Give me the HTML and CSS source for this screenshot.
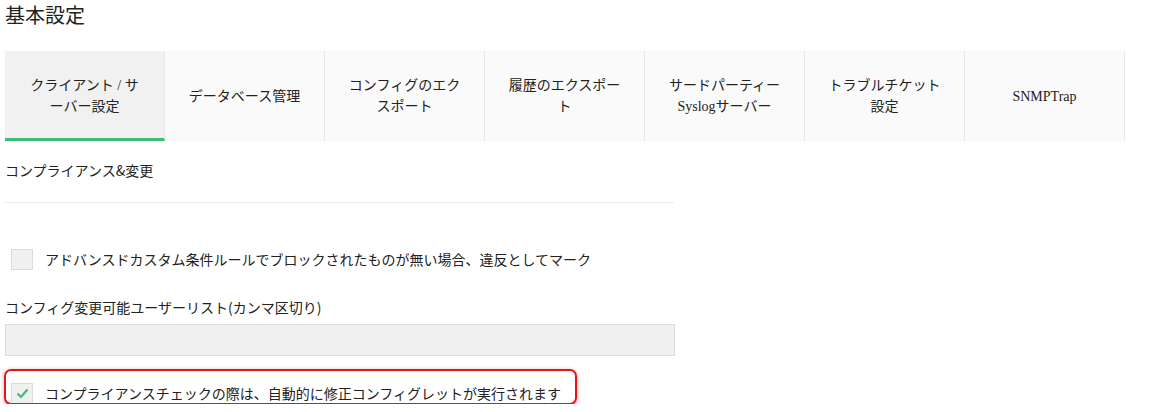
FILE: index.html
```html
<!DOCTYPE html>
<html lang="ja">
<head>
<meta charset="utf-8">
<title>基本設定</title>
<link rel="stylesheet" href="styles.css">
</head>
<body>
<div class="page">
  <h1 class="title">基本設定</h1>
  <div class="tabs">
    <div class="tab active">クライアント / サ<br>ーバー設定</div>
    <div class="tab">データベース管理</div>
    <div class="tab">コンフィグのエク<br>スポート</div>
    <div class="tab">履歴のエクスポー<br>ト</div>
    <div class="tab">サードパーティー<br>Syslogサーバー</div>
    <div class="tab">トラブルチケット<br>設定</div>
    <div class="tab">SNMPTrap</div>
  </div>
  <div class="section-head">コンプライアンス&amp;変更</div>
  <div class="check-row first">
    <span class="box"></span>
    <span class="check-label">アドバンスドカスタム条件ルールでブロックされたものが無い場合、違反としてマーク</span>
  </div>
  <div class="field-label">コンフィグ変更可能ユーザーリスト(カンマ区切り)</div>
  <div class="input"></div>
  <div class="check-row last highlighted">
    <span class="box checked">
      <svg width="13" height="11" viewBox="0 0 13 11"><polyline points="1.5,5.5 5,9 11.5,1.5" fill="none" stroke="#3dbb78" stroke-width="2.2"/></svg>
    </span>
    <span class="check-label">コンプライアンスチェックの際は、自動的に修正コンフィグレットが実行されます</span>
  </div>
</div>
</body>
</html>
```

FILE: styles.css
```css
html, body {
  margin: 0;
  padding: 0;
  background: #fff;
}
body {
  font-family: "Noto Sans CJK JP", sans-serif;
  color: #222;
}
.page {
  padding-left: 5px;
}
.title {
  margin: 0;
  font-size: 20px;
  font-weight: normal;
  line-height: 30px;
  color: #222;
}
.tabs {
  margin-top: 21px;
  display: flex;
  width: 1120px;
  height: 90px;
  background: #fafafa;
}
.tab {
  box-sizing: border-box;
  width: 160px;
  height: 90px;
  border-right: 1px solid #e8e8e8;
  display: flex;
  align-items: center;
  justify-content: center;
  text-align: center;
  font-family: "Liberation Serif", "Noto Sans CJK JP", serif;
  font-size: 14px;
  line-height: 21px;
  color: #222;
  background: #fafafa;
}
.tab.active {
  background: #f1f1f1;
  border-bottom: 3px solid #3dbb78;
  padding-top: 3px;
}
.section-head {
  margin-top: 19px;
  width: 669px;
  font-size: 14px;
  line-height: 20px;
  padding-bottom: 22px;
  border-bottom: 1px solid #ebebeb;
}
.check-row {
  display: flex;
  align-items: center;
  gap: 12px;
  padding-left: 6px;
  height: 21px;
}
.check-row.first {
  margin-top: 46px;
}
.check-row.last {
  margin-top: 27px;
}
.box {
  box-sizing: border-box;
  width: 22px;
  height: 21px;
  background: #f0f0f0;
  border: 1px solid #dcdcdc;
  display: flex;
  align-items: center;
  justify-content: center;
  flex: none;
}
.check-label {
  font-size: 14px;
  line-height: 21px;
  color: #222;
}
.field-label {
  margin-top: 27px;
  font-size: 14px;
  line-height: 20px;
}
.input {
  box-sizing: border-box;
  margin-top: 7px;
  width: 670px;
  height: 32px;
  background: #f0f0f0;
  border: 1px solid #dcdcdc;
}
.highlighted {
  position: relative;
}
.highlighted::after {
  content: "";
  position: absolute;
  left: -1px;
  top: -14px;
  width: 573px;
  height: 36px;
  box-sizing: border-box;
  border: 2px solid #f01010;
  border-radius: 7px;
  box-shadow: 0 1px 4px rgba(0, 0, 0, 0.3);
  pointer-events: none;
}
```
